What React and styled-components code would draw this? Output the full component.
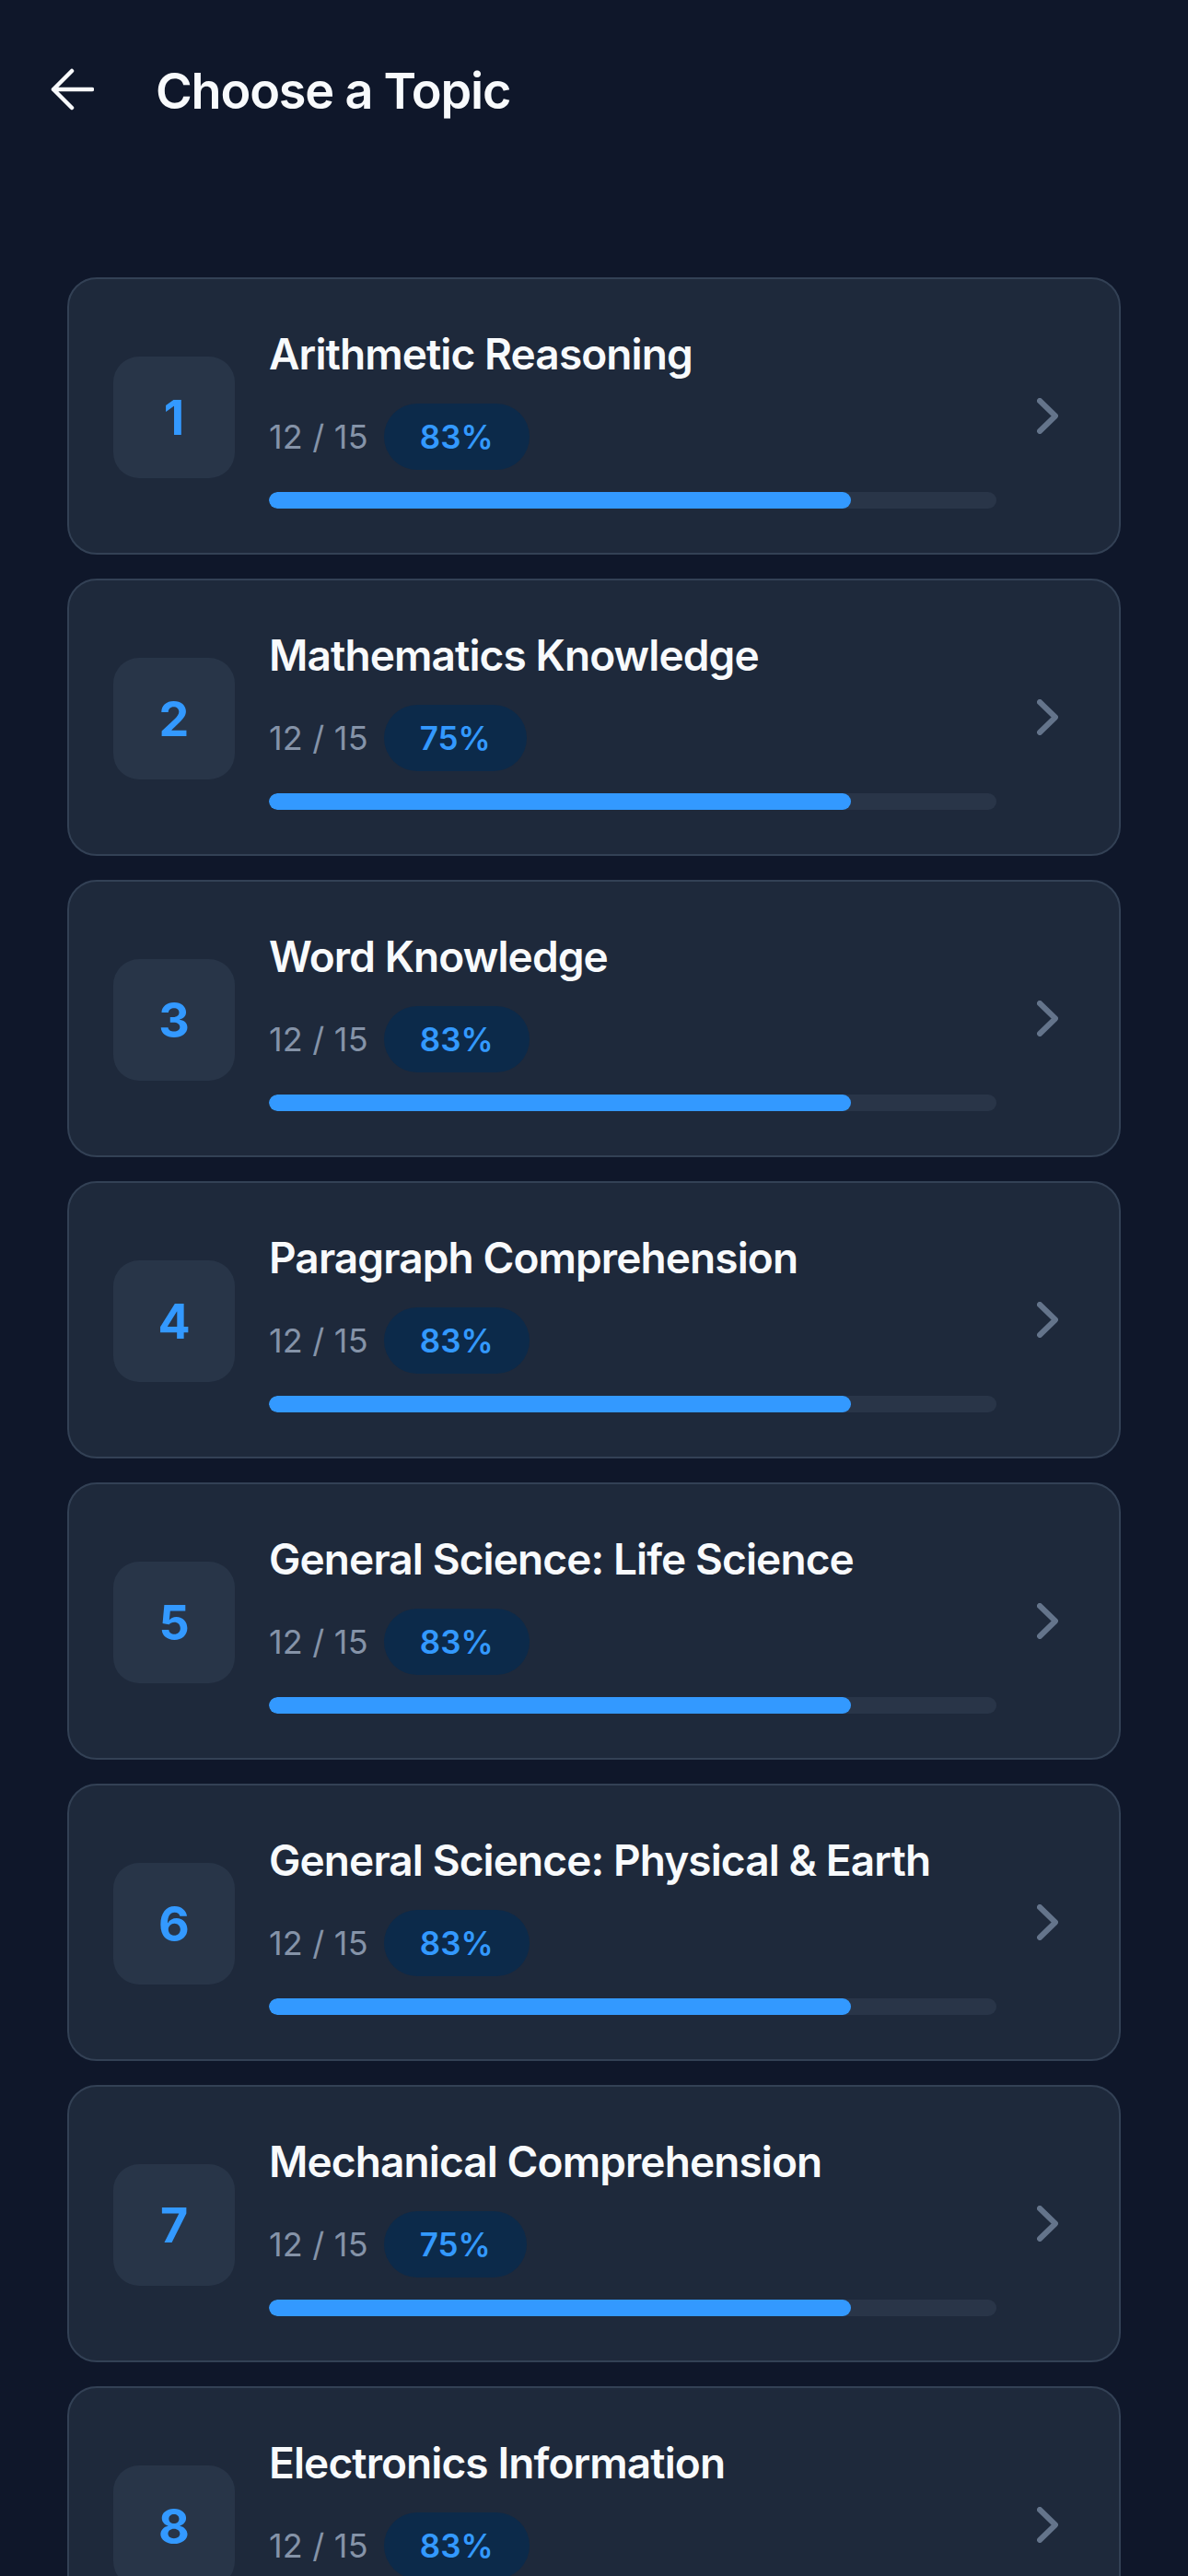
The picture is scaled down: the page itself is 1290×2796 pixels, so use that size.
import React from "react";
import styled, { createGlobalStyle } from "styled-components";

const topics = [
  { id: 1, name: "Arithmetic Reasoning", done: 12, total: 15, score: 83 },
  { id: 2, name: "Mathematics Knowledge", done: 12, total: 15, score: 75 },
  { id: 3, name: "Word Knowledge", done: 12, total: 15, score: 83 },
  { id: 4, name: "Paragraph Comprehension", done: 12, total: 15, score: 83 },
  { id: 5, name: "General Science: Life Science", done: 12, total: 15, score: 83 },
  { id: 6, name: "General Science: Physical & Earth", done: 12, total: 15, score: 83 },
  { id: 7, name: "Mechanical Comprehension", done: 12, total: 15, score: 75 },
  { id: 8, name: "Electronics Information", done: 12, total: 15, score: 83 },
];

const GlobalStyle = createGlobalStyle`
  * { box-sizing: border-box; }
  body {
    margin: 0;
    background: #0f172a;
    font-family: Inter, "Noto Sans", "Liberation Sans", sans-serif;
    -webkit-font-smoothing: antialiased;
  }
`;

const BackArrow = () => (
  <svg width="48" height="46" viewBox="0 0 48 46" fill="none">
    <path
      d="M4 23H46M24 3L4 23L24 43"
      stroke="#f8fafc"
      strokeWidth="4.5"
      strokeLinecap="round"
      strokeLinejoin="round"
    />
  </svg>
);

const Chevron = () => (
  <svg width="23" height="39" viewBox="0 0 23 39" fill="none">
    <path
      d="M3 3L20 19.5L3 36"
      stroke="#64748b"
      strokeWidth="6"
      strokeLinecap="round"
      strokeLinejoin="round"
    />
  </svg>
);

const TopicCard = ({ topic }) => (
  <Card>
    <NumberBox>{topic.id}</NumberBox>
    <Content>
      <TopicTitle>{topic.name}</TopicTitle>
      <Meta>
        <Count>
          {topic.done} / {topic.total}
        </Count>
        <ScorePill>{topic.score}%</ScorePill>
      </Meta>
      <Track>
        <Fill style={{ width: `${(topic.done / topic.total) * 100}%` }} />
      </Track>
    </Content>
    <ChevronWrap>
      <Chevron />
    </ChevronWrap>
  </Card>
);

const App = () => (
  <Page>
    <GlobalStyle />
    <Header>
      <BackButton aria-label="Back">
        <BackArrow />
      </BackButton>
      <PageTitle>Choose a Topic</PageTitle>
    </Header>
    <List>
      {topics.map(t => (
        <TopicCard key={t.id} topic={t} />
      ))}
    </List>
  </Page>
);

export default App;

const Page = styled.div`
  min-height: 100vh;
  background: #0f172a;
`;

const Header = styled.header`
  height: 194px;
  display: flex;
  align-items: center;
  padding: 0 54px;
  gap: 67px;
`;

const BackButton = styled.button`
  display: flex;
  padding: 0;
  border: none;
  background: none;
  cursor: pointer;
`;

const PageTitle = styled.h1`
  margin: 0;
  font-size: 54px;
  font-weight: 600;
  color: #f8fafc;
  letter-spacing: -1.2px;
  line-height: 1;
  padding-top: 4px;
`;

const List = styled.div`
  display: flex;
  flex-direction: column;
  gap: 26px;
  padding: 107px 73px 40px;
`;

const Card = styled.div`
  display: flex;
  align-items: center;
  height: 301px;
  padding: 0 66px 0 48px;
  background: #1e293b;
  border: 2px solid #334155;
  border-radius: 32px;
`;

const NumberBox = styled.div`
  flex: none;
  width: 132px;
  height: 132px;
  border-radius: 28px;
  background: #283548;
  display: flex;
  align-items: center;
  justify-content: center;
  font-size: 52px;
  font-weight: 700;
  color: #3399ff;
  margin-top: 3px;
`;

const Content = styled.div`
  flex: 1;
  display: flex;
  flex-direction: column;
  margin-left: 37px;
  margin-top: 6px;
`;

const TopicTitle = styled.div`
  font-size: 46px;
  font-weight: 600;
  color: #f8fafc;
  line-height: 55px;
  letter-spacing: -0.9px;
  white-space: nowrap;
`;

const Meta = styled.div`
  display: flex;
  align-items: center;
  gap: 17px;
  margin-top: 26px;
`;

const Count = styled.span`
  font-size: 36px;
  color: #8593a8;
  letter-spacing: 0.2px;
`;

const ScorePill = styled.span`
  height: 72px;
  padding: 0 39px;
  border-radius: 36px;
  background: #0c2a4a;
  color: #3399ff;
  font-size: 35px;
  font-weight: 600;
  display: flex;
  align-items: center;
`;

const Track = styled.div`
  margin-top: 24px;
  height: 18px;
  border-radius: 9px;
  background: #293548;
  overflow: hidden;
`;

const Fill = styled.div`
  height: 100%;
  border-radius: 9px;
  background: #3399ff;
`;

const ChevronWrap = styled.div`
  flex: none;
  display: flex;
  margin-left: 44px;
`;
